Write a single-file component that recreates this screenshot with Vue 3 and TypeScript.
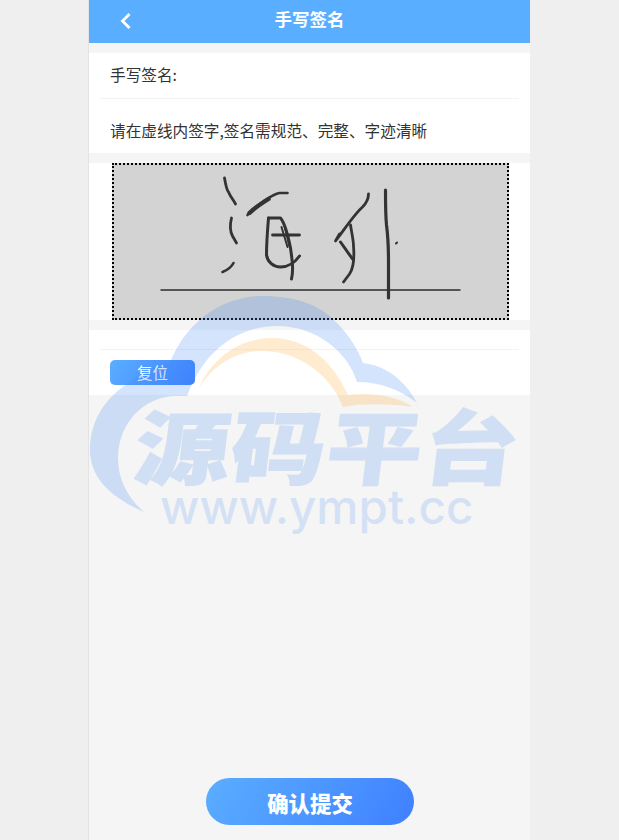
<script setup lang="ts">
interface Stroke { d: string; w: number }

const strokes: Stroke[] = [
  { d: 'M224 178 C225 184 226 190 228 192 C230 197 233 200 235 204', w: 2.8 },
  { d: 'M247 215 C252 209 256 206 262 202 C268 198 273 194 279 193 L287 193', w: 2.6 },
  { d: 'M249 213 C254 208 260 204 268 199', w: 4.4 },
  { d: 'M231 218 C229 226 230 232 232 236 L236 243', w: 2.8 },
  { d: 'M233 263 C231 267 227 270 222 272', w: 2.6 },
  { d: 'M268 218 C267 230 266 245 266 255 C267 262 273 267 280 267 C288 267 294 263 299 256', w: 3 },
  { d: 'M268 218 L280 218 C285 224 288 238 290 248 C292 262 293 270 291 279', w: 3 },
  { d: 'M272 235 L299 235', w: 2.8 },
  { d: 'M281 227 L287 247 M284 226 L289 246', w: 2 },
  { d: 'M368 194 C368 200 365 204 362 207 C354 214 345 228 335 241 L339 234', w: 2.8 },
  { d: 'M350 225 C351 232 353 240 353 246 C354 258 353 268 349 274 L343 282', w: 2.8 },
  { d: 'M340 242 L352 259', w: 3 },
  { d: 'M385 190 C385 205 385 215 386 225 C388 240 388 250 388 262 L388 298', w: 3.2 },
  { d: 'M395.5 243.5 L396.5 242.5', w: 2 }
];
</script>

<template>
  <div class="page">
    <main class="phone">
      <header class="topbar">
        <svg class="back" viewBox="0 0 12 18" width="12" height="18" aria-hidden="true">
          <path d="M10.5 2 L3.5 9 L10.5 16" fill="none" stroke="#fff" stroke-width="2.8" />
        </svg>
        <h1 class="title">手写签名</h1>
      </header>

      <section class="card notes">
        <div class="row first">手写签名:</div>
        <div class="row second">请在虚线内签字,签名需规范、完整、字迹清晰</div>
      </section>

      <section class="card board">
        <div class="canvas">
          <svg class="ink" viewBox="114 165 392 153" aria-hidden="true">
            <line x1="160" y1="290" x2="460" y2="290" stroke="#555" stroke-width="1.8" />
            <path
              v-for="(s, i) in strokes"
              :key="i"
              :d="s.d"
              fill="none"
              stroke="#333"
              :stroke-width="s.w"
              stroke-linecap="round"
              stroke-linejoin="round"
            />
          </svg>
        </div>
      </section>

      <section class="card actions">
        <div class="divider"></div>
        <button class="reset" type="button">复位</button>
      </section>

      <div class="spacer"></div>

      <footer class="bottom">
        <button class="submit" type="button">确认提交</button>
      </footer>
    </main>

    <div class="watermark" aria-hidden="true">
      <svg class="cloud" viewBox="0 0 619 840">
        <path
          class="cloud-blue"
          d="M144 512 C108 496 90 476 90 450 C90 420 106 396 132 381 C146 372 158 368 170 363 C184 325 220 296 262 296 C296 296 320 305 336 322 C350 336 358 350 363 363 C388 366 406 382 417 403 C398 388 378 382 357 382 C348 352 316 326 277 326 C238 326 204 350 187 396 L177 396 C143 396 118 424 118 458 C118 480 128 498 144 512 Z"
        />
        <path
          class="cloud-orange"
          d="M199 388 C212 358 240 338 272 338 C306 338 332 360 348 395 C372 392 396 396 413 407 C390 404 366 403 343 407 C330 374 298 351 262 351 C234 351 213 366 199 388 Z"
        />
      </svg>
      <div class="mark-cn">源码平台</div>
      <div class="mark-en">www.ympt.cc</div>
    </div>
  </div>
</template>

<style>
html,
body {
  margin: 0;
  background: #efefef;
}
</style>

<style scoped>
.page {
  position: relative;
  height: 840px;
  overflow: hidden;
  background: #efefef;
  font-family: "Noto Sans CJK SC", "Liberation Sans", sans-serif;
}

.phone {
  box-sizing: border-box;
  width: 442px;
  height: 840px;
  margin-left: 88px;
  border-left: 1px solid #e3e3e3;
  background: #f5f5f5;
  display: flex;
  flex-direction: column;
}

.topbar {
  position: relative;
  height: 43px;
  flex: none;
  background: #5aaeff;
  display: flex;
  align-items: center;
  justify-content: center;
  padding-bottom: 5px;
  box-sizing: border-box;
}

.back {
  position: absolute;
  left: 30px;
  top: 12px;
}

.title {
  margin: 0;
  font-size: 17.5px;
  font-weight: 700;
  color: #fff;
  line-height: 1;
}

.card {
  background: #fff;
  flex: none;
}

.notes {
  margin-top: 10px;
  height: 100px;
}

.row {
  box-sizing: border-box;
  padding-left: 21px;
  font-size: 15.65px;
  color: #333;
  line-height: 22px;
}

.first {
  height: 46px;
  margin: 0 11px;
  padding: 11px 0 0 10px;
  border-bottom: 1px solid #f3f3f3;
}

.second {
  padding-top: 21px;
}

.board {
  margin-top: 10px;
  height: 157px;
  padding-left: 23px;
}

.canvas {
  box-sizing: border-box;
  width: 397px;
  height: 157px;
  background: #d3d3d3;
  border: 2px dotted #000;
}

.ink {
  display: block;
  width: 393px;
  height: 153px;
}

.actions {
  margin-top: 10px;
  height: 65px;
}

.divider {
  height: 1px;
  margin: 19px 11px 0;
  background: #f3f3f3;
}

.reset {
  display: block;
  width: 85px;
  height: 25px;
  margin: 10px 0 0 21px;
  padding: 0;
  border: 0;
  border-radius: 5px;
  background: linear-gradient(120deg, #5aaeff, #3f80ff);
  color: #fff;
  font-family: inherit;
  font-size: 15.44px;
  line-height: 25px;
}

.spacer {
  flex: 1;
}

.bottom {
  height: 62px;
  flex: none;
  display: flex;
  justify-content: center;
}

.submit {
  width: 208px;
  height: 47px;
  margin-left: 1px;
  padding: 2px 0 0;
  border: 0;
  border-radius: 24px;
  background: linear-gradient(120deg, #5aaeff, #3f80ff);
  color: #fff;
  font-family: inherit;
  font-size: 21.4px;
  font-weight: 900;
}

.watermark {
  position: absolute;
  inset: 0;
  pointer-events: none;
}

.cloud {
  position: absolute;
  left: 0;
  top: 0;
  width: 619px;
  height: 840px;
}

.cloud-blue {
  fill: rgba(66, 140, 240, 0.23);
}

.cloud-orange {
  fill: rgba(250, 170, 60, 0.24);
}

.mark-cn {
  position: absolute;
  left: 136px;
  top: 384px;
  font-size: 95px;
  line-height: 120px;
  font-weight: 900;
  letter-spacing: 1px;
  white-space: nowrap;
  color: #468cf5;
  opacity: 0.2;
  -webkit-text-stroke: 1.5px #468cf5;
  transform: skewX(-7deg) scaleY(0.84);
}

.mark-en {
  position: absolute;
  left: 160px;
  top: 477px;
  font-family: Inter, "Liberation Sans", sans-serif;
  font-size: 47.5px;
  font-weight: 500;
  line-height: 60px;
  white-space: nowrap;
  color: #468cf5;
  opacity: 0.18;
}
</style>
